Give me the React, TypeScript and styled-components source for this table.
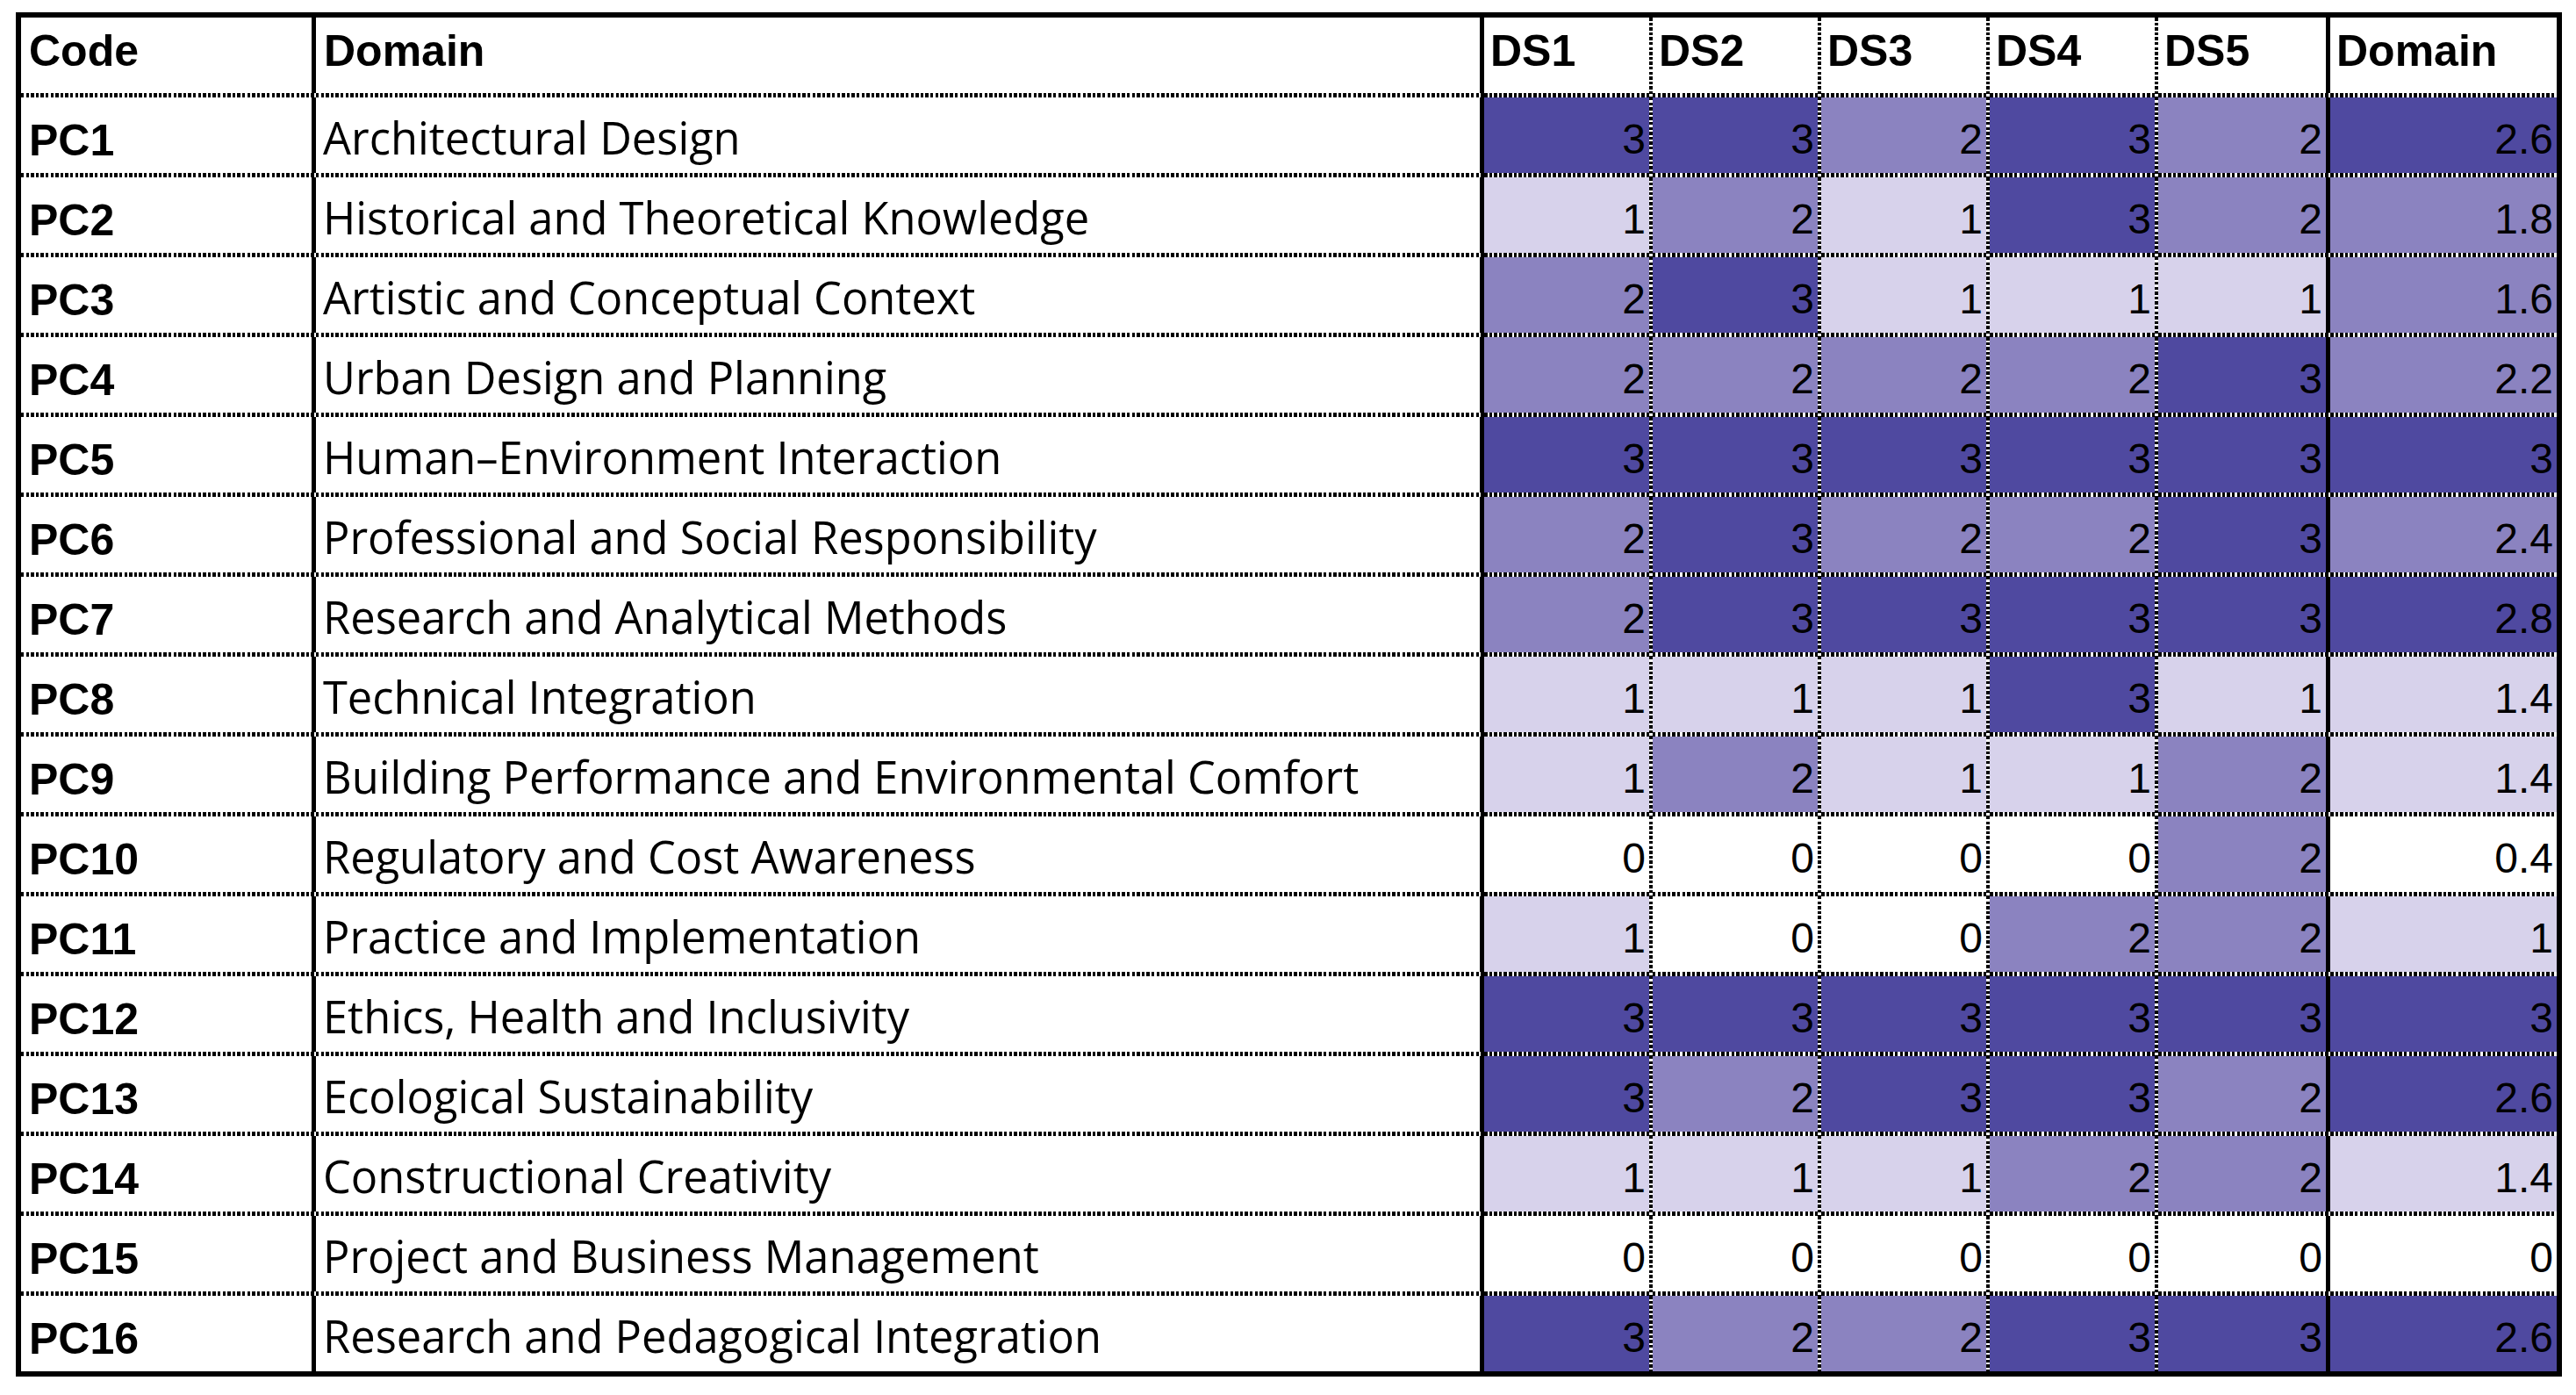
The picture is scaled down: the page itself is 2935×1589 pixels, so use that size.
import React from 'react';
import styled, { createGlobalStyle, css } from 'styled-components';

const GlobalStyle = createGlobalStyle`
  html, body {
    margin: 0;
    padding: 0;
    background: #ffffff;
  }
`;

type Edge = 'solid' | 'dotted' | 'none';
type Tone = 'none' | 'light' | 'mid' | 'dark';

const tones: Record<Tone, string> = {
  none: '#ffffff',
  light: '#d7d2eb',
  mid: '#8b83c0',
  dark: '#4f49a0',
};

const rows: { code: string; domain: string; ds: number[]; total: number }[] = [
  { code: 'PC1', domain: 'Architectural Design', ds: [3, 3, 2, 3, 2], total: 2.6 },
  { code: 'PC2', domain: 'Historical and Theoretical Knowledge', ds: [1, 2, 1, 3, 2], total: 1.8 },
  { code: 'PC3', domain: 'Artistic and Conceptual Context', ds: [2, 3, 1, 1, 1], total: 1.6 },
  { code: 'PC4', domain: 'Urban Design and Planning', ds: [2, 2, 2, 2, 3], total: 2.2 },
  { code: 'PC5', domain: 'Human\u2013Environment Interaction', ds: [3, 3, 3, 3, 3], total: 3 },
  { code: 'PC6', domain: 'Professional and Social Responsibility', ds: [2, 3, 2, 2, 3], total: 2.4 },
  { code: 'PC7', domain: 'Research and Analytical Methods', ds: [2, 3, 3, 3, 3], total: 2.8 },
  { code: 'PC8', domain: 'Technical Integration', ds: [1, 1, 1, 3, 1], total: 1.4 },
  { code: 'PC9', domain: 'Building Performance and Environmental Comfort', ds: [1, 2, 1, 1, 2], total: 1.4 },
  { code: 'PC10', domain: 'Regulatory and Cost Awareness', ds: [0, 0, 0, 0, 2], total: 0.4 },
  { code: 'PC11', domain: 'Practice and Implementation', ds: [1, 0, 0, 2, 2], total: 1 },
  { code: 'PC12', domain: 'Ethics, Health and Inclusivity', ds: [3, 3, 3, 3, 3], total: 3 },
  { code: 'PC13', domain: 'Ecological Sustainability', ds: [3, 2, 3, 3, 2], total: 2.6 },
  { code: 'PC14', domain: 'Constructional Creativity', ds: [1, 1, 1, 2, 2], total: 1.4 },
  { code: 'PC15', domain: 'Project and Business Management', ds: [0, 0, 0, 0, 0], total: 0 },
  { code: 'PC16', domain: 'Research and Pedagogical Integration', ds: [3, 2, 2, 3, 3], total: 2.6 },
];

const toneFor = (v: number): Tone => {
  if (v >= 2.5) return 'dark';
  if (v >= 1.5) return 'mid';
  if (v >= 1) return 'light';
  return 'none';
};

// excel-style dotted rule: short black dashes on white
const DOT = 5;
const dashesX = 'repeating-linear-gradient(90deg, #000 0 3.5px, #fff 3.5px 5.6px)';
const dashesY = 'repeating-linear-gradient(180deg, #000 0 3.5px, #fff 3.5px 5.6px)';

const Page = styled.div`
  padding: 14px 0 0 18px;
`;

const Grid = styled.table`
  border-collapse: separate;
  border-spacing: 0;
  table-layout: fixed;
  width: 2901px;
  border: 6px solid #000;
  background: #ffffff;
  color: #000;
`;

const cellBase = css<{ $edge: Edge; $last?: boolean }>`
  position: relative;
  box-sizing: border-box;
  height: ${(p) => (p.$last ? '86px' : '91px')};
  padding: 0;
  vertical-align: top;
  line-height: 1;
  white-space: nowrap;
  background-clip: padding-box;
  border-bottom: ${(p) => (p.$last ? 'none' : `${DOT}px solid #fff`)};
  border-right: ${(p) =>
    p.$edge === 'solid' ? '5px solid #000' : p.$edge === 'dotted' ? `${DOT - 1}px solid #fff` : 'none'};

  &::after {
    content: '';
    display: ${(p) => (p.$last ? 'none' : 'block')};
    position: absolute;
    left: 0;
    right: ${(p) => (p.$edge === 'none' ? 0 : p.$edge === 'solid' ? -5 : -(DOT - 1))}px;
    bottom: -${DOT}px;
    height: ${DOT}px;
    background: ${dashesX};
  }

  &::before {
    content: '';
    display: ${(p) => (p.$edge === 'dotted' ? 'block' : 'none')};
    position: absolute;
    top: 0;
    bottom: ${(p) => (p.$last ? 0 : -DOT)}px;
    right: -${DOT - 1}px;
    width: ${DOT - 1}px;
    background: ${dashesY};
    z-index: 1;
  }
`;

const HeaderCell = styled.th<{ $edge: Edge; $width: number; $last?: boolean }>`
  ${cellBase};
  width: ${(p) => p.$width}px;
  text-align: left;
  font-family: 'Liberation Sans', Arial, sans-serif;
  font-weight: 700;
  font-size: 50px;
  padding: 13px 0 0 ${(p) => (p.$width > 300 ? 9 : 7)}px;
  background-color: #ffffff;
`;

const CodeCell = styled.td<{ $edge: Edge; $last?: boolean }>`
  ${cellBase};
  font-family: 'Liberation Sans', Arial, sans-serif;
  font-weight: 700;
  font-size: 50px;
  padding: 24px 0 0 9px;
`;

const DomainCell = styled.td<{ $edge: Edge; $last?: boolean }>`
  ${cellBase};
  font-family: 'Open Sans', 'Noto Sans', sans-serif;
  font-size: 50.6px;
  padding: 21px 0 0 8px;
`;

const ScoreCell = styled.td<{ $edge: Edge; $tone: Tone; $last?: boolean }>`
  ${cellBase};
  font-family: 'Liberation Sans', Arial, sans-serif;
  font-size: 48px;
  text-align: right;
  padding: 24px 4px 0 0;
  background-color: ${(p) => tones[p.$tone]};
`;

const columns: { label: string; edge: Edge; width: number }[] = [
  { label: 'Code', edge: 'solid', width: 336 },
  { label: 'Domain', edge: 'solid', width: 1331 },
  { label: 'DS1', edge: 'dotted', width: 192 },
  { label: 'DS2', edge: 'dotted', width: 192 },
  { label: 'DS3', edge: 'dotted', width: 192 },
  { label: 'DS4', edge: 'dotted', width: 192 },
  { label: 'DS5', edge: 'solid', width: 196 },
  { label: 'Domain', edge: 'none', width: 258 },
];

export default function App() {
  return (
    <Page>
      <GlobalStyle />
      <Grid>
        <thead>
          <tr>
            {columns.map((c, i) => (
              <HeaderCell key={i} $edge={c.edge} $width={c.width}>
                {c.label}
              </HeaderCell>
            ))}
          </tr>
        </thead>
        <tbody>
          {rows.map((r, ri) => {
            const last = ri === rows.length - 1;
            return (
              <tr key={r.code}>
                <CodeCell $edge="solid" $last={last}>{r.code}</CodeCell>
                <DomainCell $edge="solid" $last={last}>{r.domain}</DomainCell>
                {r.ds.map((v, i) => (
                  <ScoreCell key={i} $edge={i === 4 ? 'solid' : 'dotted'} $tone={toneFor(v)} $last={last}>
                    {v}
                  </ScoreCell>
                ))}
                <ScoreCell $edge="none" $tone={toneFor(r.total)} $last={last}>
                  {r.total}
                </ScoreCell>
              </tr>
            );
          })}
        </tbody>
      </Grid>
    </Page>
  );
}
